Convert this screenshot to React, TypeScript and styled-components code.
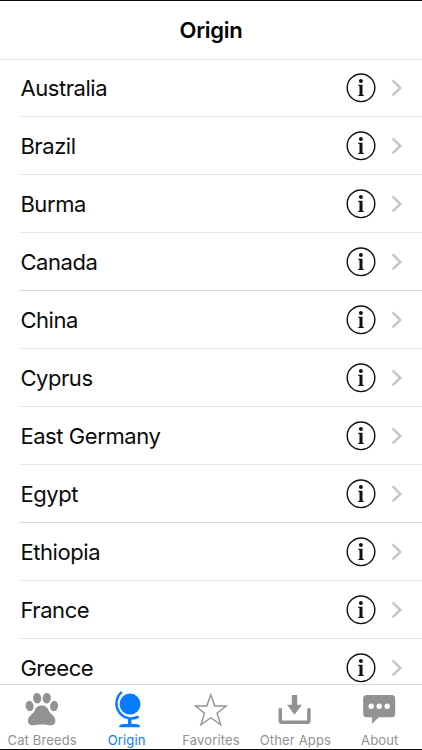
import React from "react";
import styled, { createGlobalStyle } from "styled-components";

const GlobalStyle = createGlobalStyle`
  *, *::before, *::after { box-sizing: border-box; }
  html, body { margin: 0; padding: 0; overflow: hidden; }
  body { font-family: Inter, "Liberation Sans", sans-serif; background: #fff; }
`;

const Screen = styled.main`
  width: 100%;
  height: 750px;
  display: flex;
  flex-direction: column;
  overflow: hidden;
  background: #fff;
  border-top: 1px solid #0b0b0d;
  border-bottom: 1px solid #0b0b0d;
`;

const NavBar = styled.header`
  flex: none;
  height: 59px;
  display: flex;
  align-items: center;
  justify-content: center;
  border-bottom: 1px solid #e1e1e1;
`;

const Title = styled.h1`
  margin: 0;
  font-size: 22px;
  line-height: 28px;
  font-weight: 600;
  letter-spacing: -0.3px;
  color: #000;
`;

const List = styled.ul`
  flex: 1;
  min-height: 0;
  margin: 0;
  padding: 0;
  list-style: none;
  overflow: hidden;
`;

const Row = styled.li`
  height: 58px;
  margin-left: 20px;
  padding-left: 0.4px;
  padding-right: 19px;
  display: flex;
  align-items: center;
  border-bottom: 1px solid #e8e8e9;

  &:first-child {
    height: 57px;
    padding-bottom: 1px;
  }
  &:nth-child(4n) {
    border-bottom-color: #d6d6d7;
  }
`;

const Country = styled.span`
  flex: 1;
  font-size: 22px;
  line-height: 28px;
  letter-spacing: -0.43px;
  color: #0c0c0c;
`;

const InfoIcon = styled.svg`
  width: 30px;
  height: 30px;
  margin-right: 15px;
`;

const Chevron = styled.svg`
  width: 12px;
  height: 18px;
`;

const TabBar = styled.nav`
  flex: none;
  height: 65px;
  display: grid;
  grid-template-columns: repeat(5, 1fr);
  border-top: 1px solid #d9d9d9;
`;

const Tab = styled.a<{ $active?: boolean }>`
  display: flex;
  flex-direction: column;
  align-items: center;
  padding-top: 5px;
  color: ${(p) => (p.$active ? "#087cff" : "#929292")};
`;

const TabIcon = styled.svg`
  width: 40px;
  height: 40px;
  flex: none;
`;

const TabLabel = styled.span`
  margin-top: 2px;
  font-size: 13px;
  line-height: 16px;
  letter-spacing: 0.15px;
  white-space: nowrap;
`;

const countries = [
  "Australia", "Brazil", "Burma", "Canada", "China", "Cyprus",
  "East Germany", "Egypt", "Ethiopia", "France", "Greece",
];

const Paw = () => (
  <TabIcon viewBox="0 0 40 40" fill="currentColor">
    <ellipse cx="15.2" cy="8.2" rx="4.1" ry="5.3" transform="rotate(-6 15.2 8.2)" />
    <ellipse cx="24.7" cy="8.2" rx="4.1" ry="5.3" transform="rotate(6 24.7 8.2)" />
    <ellipse cx="7.6" cy="16" rx="4" ry="5.2" transform="rotate(-12 7.6 16)" />
    <ellipse cx="32.1" cy="16" rx="4" ry="5.2" transform="rotate(12 32.1 16)" />
    <path d="M19.7 15.6C15.8 15.6 13.7 17.8 12.7 20.6C11.7 23.8 6.3 25.6 6 30.4C5.8 33.7 8.3 35.5 11.5 35.3C14.5 35.1 16.7 34.5 19.7 34.5S24.900 35.100 27.900 35.300C31.100 35.500 33.600 33.700 33.400 30.400C33.100 25.600 27.700 23.800 26.700 20.600C25.700 17.800 23.600 15.600 19.700 15.600Z" />
  </TabIcon>
);

const Globe = () => (
  <TabIcon viewBox="0 0 40 40" fill="none" stroke="currentColor">
    <circle cx="23" cy="14.1" r="10.5" fill="currentColor" stroke="none" />
    <path d="M14.1 2.7A14.9 14.9 0 0 0 30.7 27" strokeWidth="2.5" strokeLinecap="round" />
    <path d="M22.7 28.5V35" strokeWidth="3.6" />
    <path d="M12 37.2C12 34.9 14 34.1 17 34.1H28.2C31.2 34.1 33.2 34.9 33.2 37.2Z" fill="currentColor" stroke="none" />
  </TabIcon>
);

const Star = () => (
  <TabIcon viewBox="0 0 40 40" fill="none" stroke="currentColor" strokeWidth="1.4">
    <path d="M19.8 4.7L23.8 16H35.2L26.1 23.2L29.7 34.8L19.8 27.8L9.9 34.8L13.5 23.2L4.4 16H15.8Z" />
  </TabIcon>
);

const Download = () => (
  <TabIcon viewBox="0 0 40 40" fill="currentColor">
    <path d="M16.8 5H22.2V14.8H27L19.5 24.7L12 14.8H16.8Z" />
    <path d="M5.3 18.3V30.7Q5.3 32.3 6.9 32.3H32.3Q33.9 32.3 33.9 30.7V18.3" fill="none" stroke="currentColor" strokeWidth="3.5" />
  </TabIcon>
);

const Bubble = () => (
  <TabIcon viewBox="0 0 40 40" fill="currentColor">
    <path transform="translate(-0.8 0)" fillRule="evenodd" d="M7.5 5H32.5Q36 5 36 8.5V23.8Q36 27.3 32.5 27.3H19.5L12.9 33.8V27.3H7.5Q4 27.3 4 23.8V8.5Q4 5 7.5 5ZM12 13.5a2.7 2.7 0 1 0 0 5.4a2.7 2.7 0 1 0 0-5.4ZM20 13.5a2.7 2.7 0 1 0 0 5.4a2.7 2.7 0 1 0 0-5.4ZM28 13.5a2.7 2.7 0 1 0 0 5.4a2.7 2.7 0 1 0 0-5.4Z" />
  </TabIcon>
);

const tabs = [
  { label: "Cat Breeds", Icon: Paw },
  { label: "Origin", Icon: Globe, active: true },
  { label: "Favorites", Icon: Star },
  { label: "Other Apps", Icon: Download },
  { label: "About", Icon: Bubble },
];

export default function App() {
  return (
    <>
      <GlobalStyle />
      <Screen>
        <NavBar>
          <Title>Origin</Title>
        </NavBar>
        <List>
          {countries.map((name) => (
            <Row key={name}>
              <Country>{name}</Country>
              <InfoIcon viewBox="0 0 30 30" fill="#111">
                <circle cx="15" cy="14.8" r="13.8" fill="none" stroke="#111" strokeWidth="1.4" />
                <circle cx="14.9" cy="8.1" r="2" />
                <path d="M12 11.8H16.5V21.2Q16.5 22.3 17.900 22.300V23H12V22.300Q13.500 22.300 13.500 21.200V13.500Q13.500 12.500 12 12.500Z" />
              </InfoIcon>
              <Chevron viewBox="0 0 12 18" fill="none" stroke="#c6c6ca" strokeWidth="2.5">
                <path d="M1.6 1.400L9.300 8.900L1.600 16.400" />
              </Chevron>
            </Row>
          ))}
        </List>
        <TabBar>
          {tabs.map(({ label, Icon, active }) => (
            <Tab key={label} $active={active}>
              <Icon />
              <TabLabel>{label}</TabLabel>
            </Tab>
          ))}
        </TabBar>
      </Screen>
    </>
  );
}
